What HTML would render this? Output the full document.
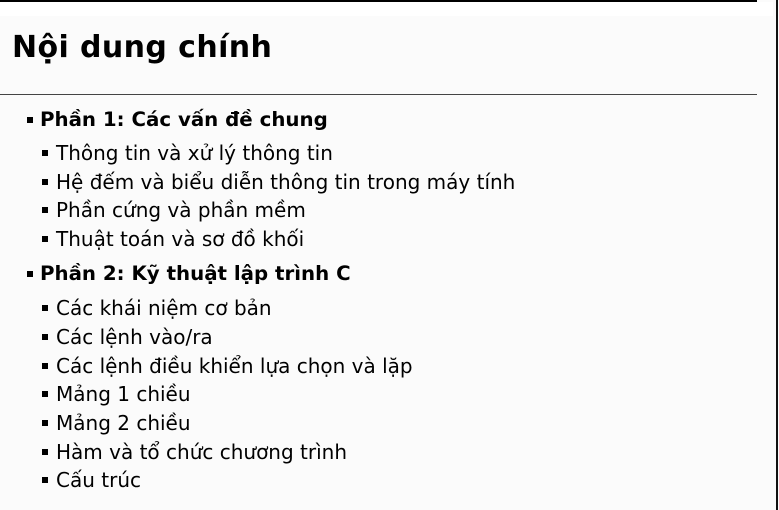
<!DOCTYPE html>
<html><head><meta charset="utf-8"><style>
html,body{margin:0;padding:0}
body{width:779px;height:510px;background:#fbfbfb;position:relative;overflow:hidden;font-family:"DejaVu Sans","Liberation Sans",sans-serif;color:#000}
.top{position:absolute;left:0;top:0;width:757px;height:2px;background:#000}
.topbg{position:absolute;left:0;top:2px;width:773px;height:14px;background:#fff}
.vr{position:absolute;left:776px;top:0;width:2px;height:510px;background:#111}
.hr{position:absolute;left:0;top:94px;width:757px;height:1px;background:#444}
h1{position:absolute;left:12px;top:28px;margin:0;font-size:30px;font-weight:bold;line-height:40px;letter-spacing:0.4px}
.l{position:absolute;white-space:nowrap;line-height:24px}
.l1{left:40px;font-weight:bold;font-size:19.8px}
.l2{left:56px;font-size:20px}
.b{position:absolute;width:6px;height:6px;background:#000}
</style></head><body>
<div class="top"></div><div class="topbg"></div><div class="vr"></div>
<h1>Nội dung chính</h1>
<div class="hr"></div>

<div class="b" style="left:27px;top:117px"></div><div class="l l1" style="top:108px">Phần 1: Các vấn đề chung</div>
<div class="b" style="left:42px;top:150px"></div><div class="l l2" style="top:141px">Thông tin và xử lý thông tin</div>
<div class="b" style="left:42px;top:179px"></div><div class="l l2" style="top:170px">Hệ đếm và biểu diễn thông tin trong máy tính</div>
<div class="b" style="left:42px;top:207px"></div><div class="l l2" style="top:198px">Phần cứng và phần mềm</div>
<div class="b" style="left:42px;top:236px"></div><div class="l l2" style="top:227px">Thuật toán và sơ đồ khối</div>
<div class="b" style="left:27px;top:271px"></div><div class="l l1" style="top:262px">Phần 2: Kỹ thuật lập trình C</div>
<div class="b" style="left:42px;top:305px"></div><div class="l l2" style="top:296px">Các khái niệm cơ bản</div>
<div class="b" style="left:42px;top:334px"></div><div class="l l2" style="top:325px">Các lệnh vào/ra</div>
<div class="b" style="left:42px;top:363px"></div><div class="l l2" style="top:354px">Các lệnh điều khiển lựa chọn và lặp</div>
<div class="b" style="left:42px;top:391px"></div><div class="l l2" style="top:382px">Mảng 1 chiều</div>
<div class="b" style="left:42px;top:420px"></div><div class="l l2" style="top:411px">Mảng 2 chiều</div>
<div class="b" style="left:42px;top:449px"></div><div class="l l2" style="top:440px">Hàm và tổ chức chương trình</div>
<div class="b" style="left:42px;top:477px"></div><div class="l l2" style="top:468px">Cấu trúc</div>
</body></html>
